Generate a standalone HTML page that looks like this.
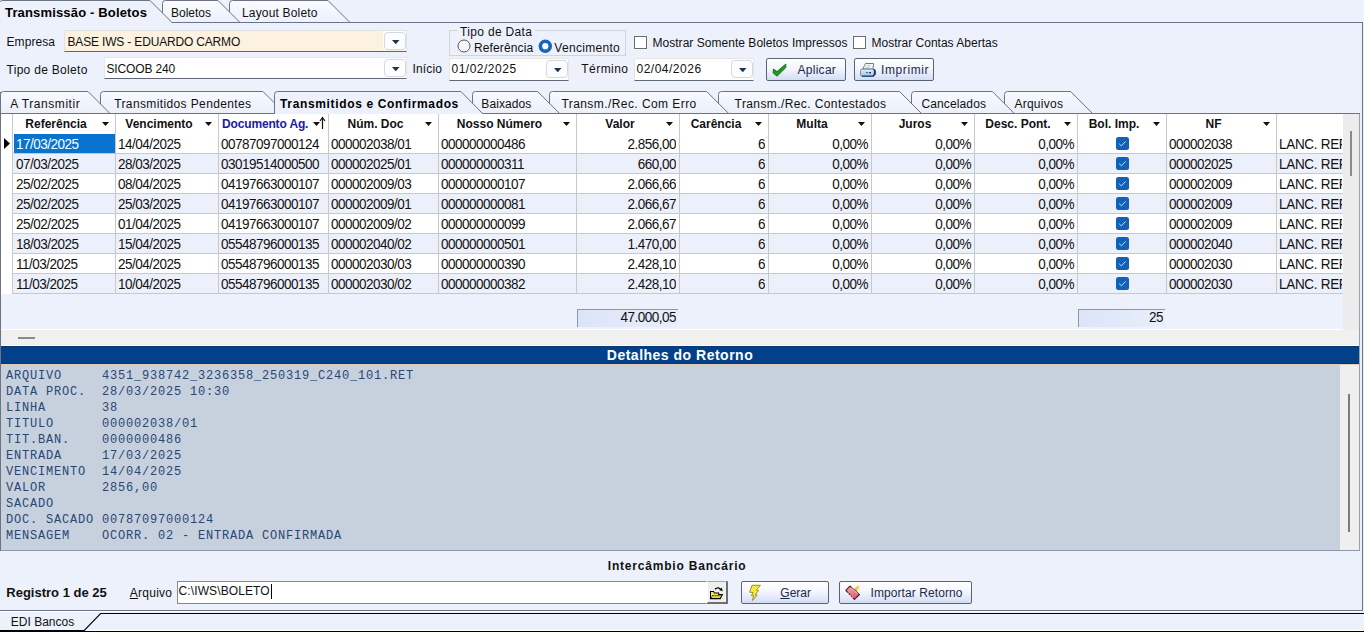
<!DOCTYPE html><html><head><meta charset="utf-8"><style>
html,body{margin:0;padding:0;}
body{width:1364px;height:632px;overflow:hidden;position:relative;background:#ecf1fc;font-family:"Liberation Sans",sans-serif;}
.t{position:absolute;white-space:nowrap;}
svg{position:absolute;left:0;top:0;}
</style></head><body>
<div style="position:absolute;left:1px;top:114px;width:1358px;height:437px;background:#f0f0f0"></div>
<div style="position:absolute;left:1px;top:114px;width:1342px;height:215px;background:#ecf1fc"></div>
<div style="position:absolute;left:1px;top:114px;width:1342px;height:180px;background:#ffffff"></div>
<div style="position:absolute;left:13px;top:154px;width:1330px;height:19px;background:#ebf0fb"></div>
<div style="position:absolute;left:13px;top:194px;width:1330px;height:19px;background:#ebf0fb"></div>
<div style="position:absolute;left:13px;top:234px;width:1330px;height:19px;background:#ebf0fb"></div>
<div style="position:absolute;left:13px;top:274px;width:1330px;height:19px;background:#ebf0fb"></div>
<div style="position:absolute;left:14px;top:134px;width:101px;height:19px;background:#0874d0"></div>
<div style="position:absolute;left:13px;top:153px;width:1330px;height:1px;background:#c6c8cd"></div>
<div style="position:absolute;left:13px;top:173px;width:1330px;height:1px;background:#c6c8cd"></div>
<div style="position:absolute;left:13px;top:193px;width:1330px;height:1px;background:#c6c8cd"></div>
<div style="position:absolute;left:13px;top:213px;width:1330px;height:1px;background:#c6c8cd"></div>
<div style="position:absolute;left:13px;top:233px;width:1330px;height:1px;background:#c6c8cd"></div>
<div style="position:absolute;left:13px;top:253px;width:1330px;height:1px;background:#c6c8cd"></div>
<div style="position:absolute;left:13px;top:273px;width:1330px;height:1px;background:#c6c8cd"></div>
<div style="position:absolute;left:13px;top:293px;width:1330px;height:1px;background:#c6c8cd"></div>
<div style="position:absolute;left:12px;top:114px;width:1px;height:180px;background:#c6c8cd"></div>
<div style="position:absolute;left:115px;top:114px;width:1px;height:180px;background:#c6c8cd"></div>
<div style="position:absolute;left:218px;top:114px;width:1px;height:180px;background:#c6c8cd"></div>
<div style="position:absolute;left:328px;top:114px;width:1px;height:180px;background:#c6c8cd"></div>
<div style="position:absolute;left:438px;top:114px;width:1px;height:180px;background:#c6c8cd"></div>
<div style="position:absolute;left:576px;top:114px;width:1px;height:180px;background:#c6c8cd"></div>
<div style="position:absolute;left:679px;top:114px;width:1px;height:180px;background:#c6c8cd"></div>
<div style="position:absolute;left:768px;top:114px;width:1px;height:180px;background:#c6c8cd"></div>
<div style="position:absolute;left:871px;top:114px;width:1px;height:180px;background:#c6c8cd"></div>
<div style="position:absolute;left:974px;top:114px;width:1px;height:180px;background:#c6c8cd"></div>
<div style="position:absolute;left:1077px;top:114px;width:1px;height:180px;background:#c6c8cd"></div>
<div style="position:absolute;left:1166px;top:114px;width:1px;height:180px;background:#c6c8cd"></div>
<div style="position:absolute;left:1276px;top:114px;width:1px;height:180px;background:#c6c8cd"></div>
<div class="t" style="left:-144.0px;width:400px;text-align:center;top:117.64px;font-size:12px;line-height:12px;font-weight:bold;color:#111111;letter-spacing:0px;">Referência</div>
<svg style="left:102px;top:122px" width="8" height="5"><path d="M0 0H7L3.5 4Z" fill="#111"/></svg>
<div class="t" style="left:-41.0px;width:400px;text-align:center;top:117.64px;font-size:12px;line-height:12px;font-weight:bold;color:#111111;letter-spacing:0px;">Vencimento</div>
<svg style="left:205px;top:122px" width="8" height="5"><path d="M0 0H7L3.5 4Z" fill="#111"/></svg>
<div class="t" style="left:222px;top:117.64px;font-size:12px;line-height:12px;font-weight:bold;color:#20209c;letter-spacing:-0.15px;font-family:'Liberation Sans', sans-serif;">Documento Ag.</div>
<svg style="left:313px;top:122px" width="8" height="5"><path d="M0 0H7L3.5 4Z" fill="#111"/></svg>
<div class="t" style="left:175.5px;width:400px;text-align:center;top:117.64px;font-size:12px;line-height:12px;font-weight:bold;color:#111111;letter-spacing:0px;">Núm. Doc</div>
<svg style="left:425px;top:122px" width="8" height="5"><path d="M0 0H7L3.5 4Z" fill="#111"/></svg>
<div class="t" style="left:299.5px;width:400px;text-align:center;top:117.64px;font-size:12px;line-height:12px;font-weight:bold;color:#111111;letter-spacing:0px;">Nosso Número</div>
<svg style="left:563px;top:122px" width="8" height="5"><path d="M0 0H7L3.5 4Z" fill="#111"/></svg>
<div class="t" style="left:420.0px;width:400px;text-align:center;top:117.64px;font-size:12px;line-height:12px;font-weight:bold;color:#111111;letter-spacing:0px;">Valor</div>
<svg style="left:666px;top:122px" width="8" height="5"><path d="M0 0H7L3.5 4Z" fill="#111"/></svg>
<div class="t" style="left:516.0px;width:400px;text-align:center;top:117.64px;font-size:12px;line-height:12px;font-weight:bold;color:#111111;letter-spacing:0px;">Carência</div>
<svg style="left:755px;top:122px" width="8" height="5"><path d="M0 0H7L3.5 4Z" fill="#111"/></svg>
<div class="t" style="left:612.0px;width:400px;text-align:center;top:117.64px;font-size:12px;line-height:12px;font-weight:bold;color:#111111;letter-spacing:0px;">Multa</div>
<svg style="left:858px;top:122px" width="8" height="5"><path d="M0 0H7L3.5 4Z" fill="#111"/></svg>
<div class="t" style="left:715.0px;width:400px;text-align:center;top:117.64px;font-size:12px;line-height:12px;font-weight:bold;color:#111111;letter-spacing:0px;">Juros</div>
<svg style="left:961px;top:122px" width="8" height="5"><path d="M0 0H7L3.5 4Z" fill="#111"/></svg>
<div class="t" style="left:818.0px;width:400px;text-align:center;top:117.64px;font-size:12px;line-height:12px;font-weight:bold;color:#111111;letter-spacing:0px;">Desc. Pont.</div>
<svg style="left:1064px;top:122px" width="8" height="5"><path d="M0 0H7L3.5 4Z" fill="#111"/></svg>
<div class="t" style="left:914.0px;width:400px;text-align:center;top:117.64px;font-size:12px;line-height:12px;font-weight:bold;color:#111111;letter-spacing:0px;">Bol. Imp.</div>
<svg style="left:1153px;top:122px" width="8" height="5"><path d="M0 0H7L3.5 4Z" fill="#111"/></svg>
<div class="t" style="left:1013.5px;width:400px;text-align:center;top:117.64px;font-size:12px;line-height:12px;font-weight:bold;color:#111111;letter-spacing:0px;">NF</div>
<svg style="left:1263px;top:122px" width="8" height="5"><path d="M0 0H7L3.5 4Z" fill="#111"/></svg>
<svg style="left:318px;top:116px" width="9" height="14"><path d="M4.5 1.8V13" stroke="#111" stroke-width="1.2"/><path d="M2 5L4.5 1.5L7 5" stroke="#111" stroke-width="1.2" fill="none"/></svg>
<div class="t" style="left:16px;top:137.67px;font-size:13.5px;line-height:13.5px;font-weight:normal;color:#ffffff;letter-spacing:-0.5px;font-family:'Liberation Sans', sans-serif;transform:scaleY(1.1);transform-origin:0 11.43px;">17/03/2025</div>
<div class="t" style="left:118px;top:137.67px;font-size:13.5px;line-height:13.5px;font-weight:normal;color:#111;letter-spacing:-0.5px;font-family:'Liberation Sans', sans-serif;transform:scaleY(1.1);transform-origin:0 11.43px;">14/04/2025</div>
<div class="t" style="left:221px;top:137.67px;font-size:13.5px;line-height:13.5px;font-weight:normal;color:#111;letter-spacing:-0.5px;font-family:'Liberation Sans', sans-serif;transform:scaleY(1.1);transform-origin:0 11.43px;">00787097000124</div>
<div class="t" style="left:331px;top:137.67px;font-size:13.5px;line-height:13.5px;font-weight:normal;color:#111;letter-spacing:-0.5px;font-family:'Liberation Sans', sans-serif;transform:scaleY(1.1);transform-origin:0 11.43px;">000002038/01</div>
<div class="t" style="left:441px;top:137.67px;font-size:13.5px;line-height:13.5px;font-weight:normal;color:#111;letter-spacing:-0.5px;font-family:'Liberation Sans', sans-serif;transform:scaleY(1.1);transform-origin:0 11.43px;">000000000486</div>
<div class="t" style="right:688px;top:137.67px;font-size:13.5px;line-height:13.5px;font-weight:normal;color:#111;letter-spacing:-0.5px;text-align:right;transform:scaleY(1.1);transform-origin:0 11.43px;">2.856,00</div>
<div class="t" style="right:599px;top:137.67px;font-size:13.5px;line-height:13.5px;font-weight:normal;color:#111;letter-spacing:-0.5px;text-align:right;transform:scaleY(1.1);transform-origin:0 11.43px;">6</div>
<div class="t" style="right:496px;top:137.67px;font-size:13.5px;line-height:13.5px;font-weight:normal;color:#111;letter-spacing:-0.5px;text-align:right;transform:scaleY(1.1);transform-origin:0 11.43px;">0,00%</div>
<div class="t" style="right:393px;top:137.67px;font-size:13.5px;line-height:13.5px;font-weight:normal;color:#111;letter-spacing:-0.5px;text-align:right;transform:scaleY(1.1);transform-origin:0 11.43px;">0,00%</div>
<div class="t" style="right:290px;top:137.67px;font-size:13.5px;line-height:13.5px;font-weight:normal;color:#111;letter-spacing:-0.5px;text-align:right;transform:scaleY(1.1);transform-origin:0 11.43px;">0,00%</div>
<svg style="left:1116px;top:137px" width="13" height="13"><rect x="0" y="0" width="13" height="13" rx="2.5" fill="#1160b9"/><path d="M3.2 6.8L5.4 8.8L9.6 4.4" stroke="#c4def8" stroke-width="1" fill="none"/></svg>
<div class="t" style="left:1169px;top:137.67px;font-size:13.5px;line-height:13.5px;font-weight:normal;color:#111;letter-spacing:-0.5px;font-family:'Liberation Sans', sans-serif;transform:scaleY(1.1);transform-origin:0 11.43px;">000002038</div>
<div class="t" style="left:1279px;top:137.67px;width:63px;overflow:hidden;font-size:13.5px;line-height:13.5px;letter-spacing:-0.3px;color:#111;transform:scaleY(1.1);transform-origin:0 11.43px;">LANC. REF. DOC</div>
<div class="t" style="left:16px;top:157.67px;font-size:13.5px;line-height:13.5px;font-weight:normal;color:#111;letter-spacing:-0.5px;font-family:'Liberation Sans', sans-serif;transform:scaleY(1.1);transform-origin:0 11.43px;">07/03/2025</div>
<div class="t" style="left:118px;top:157.67px;font-size:13.5px;line-height:13.5px;font-weight:normal;color:#111;letter-spacing:-0.5px;font-family:'Liberation Sans', sans-serif;transform:scaleY(1.1);transform-origin:0 11.43px;">28/03/2025</div>
<div class="t" style="left:221px;top:157.67px;font-size:13.5px;line-height:13.5px;font-weight:normal;color:#111;letter-spacing:-0.5px;font-family:'Liberation Sans', sans-serif;transform:scaleY(1.1);transform-origin:0 11.43px;">03019514000500</div>
<div class="t" style="left:331px;top:157.67px;font-size:13.5px;line-height:13.5px;font-weight:normal;color:#111;letter-spacing:-0.5px;font-family:'Liberation Sans', sans-serif;transform:scaleY(1.1);transform-origin:0 11.43px;">000002025/01</div>
<div class="t" style="left:441px;top:157.67px;font-size:13.5px;line-height:13.5px;font-weight:normal;color:#111;letter-spacing:-0.5px;font-family:'Liberation Sans', sans-serif;transform:scaleY(1.1);transform-origin:0 11.43px;">000000000311</div>
<div class="t" style="right:688px;top:157.67px;font-size:13.5px;line-height:13.5px;font-weight:normal;color:#111;letter-spacing:-0.5px;text-align:right;transform:scaleY(1.1);transform-origin:0 11.43px;">660,00</div>
<div class="t" style="right:599px;top:157.67px;font-size:13.5px;line-height:13.5px;font-weight:normal;color:#111;letter-spacing:-0.5px;text-align:right;transform:scaleY(1.1);transform-origin:0 11.43px;">6</div>
<div class="t" style="right:496px;top:157.67px;font-size:13.5px;line-height:13.5px;font-weight:normal;color:#111;letter-spacing:-0.5px;text-align:right;transform:scaleY(1.1);transform-origin:0 11.43px;">0,00%</div>
<div class="t" style="right:393px;top:157.67px;font-size:13.5px;line-height:13.5px;font-weight:normal;color:#111;letter-spacing:-0.5px;text-align:right;transform:scaleY(1.1);transform-origin:0 11.43px;">0,00%</div>
<div class="t" style="right:290px;top:157.67px;font-size:13.5px;line-height:13.5px;font-weight:normal;color:#111;letter-spacing:-0.5px;text-align:right;transform:scaleY(1.1);transform-origin:0 11.43px;">0,00%</div>
<svg style="left:1116px;top:157px" width="13" height="13"><rect x="0" y="0" width="13" height="13" rx="2.5" fill="#1160b9"/><path d="M3.2 6.8L5.4 8.8L9.6 4.4" stroke="#c4def8" stroke-width="1" fill="none"/></svg>
<div class="t" style="left:1169px;top:157.67px;font-size:13.5px;line-height:13.5px;font-weight:normal;color:#111;letter-spacing:-0.5px;font-family:'Liberation Sans', sans-serif;transform:scaleY(1.1);transform-origin:0 11.43px;">000002025</div>
<div class="t" style="left:1279px;top:157.67px;width:63px;overflow:hidden;font-size:13.5px;line-height:13.5px;letter-spacing:-0.3px;color:#111;transform:scaleY(1.1);transform-origin:0 11.43px;">LANC. REF. DOC</div>
<div class="t" style="left:16px;top:177.67px;font-size:13.5px;line-height:13.5px;font-weight:normal;color:#111;letter-spacing:-0.5px;font-family:'Liberation Sans', sans-serif;transform:scaleY(1.1);transform-origin:0 11.43px;">25/02/2025</div>
<div class="t" style="left:118px;top:177.67px;font-size:13.5px;line-height:13.5px;font-weight:normal;color:#111;letter-spacing:-0.5px;font-family:'Liberation Sans', sans-serif;transform:scaleY(1.1);transform-origin:0 11.43px;">08/04/2025</div>
<div class="t" style="left:221px;top:177.67px;font-size:13.5px;line-height:13.5px;font-weight:normal;color:#111;letter-spacing:-0.5px;font-family:'Liberation Sans', sans-serif;transform:scaleY(1.1);transform-origin:0 11.43px;">04197663000107</div>
<div class="t" style="left:331px;top:177.67px;font-size:13.5px;line-height:13.5px;font-weight:normal;color:#111;letter-spacing:-0.5px;font-family:'Liberation Sans', sans-serif;transform:scaleY(1.1);transform-origin:0 11.43px;">000002009/03</div>
<div class="t" style="left:441px;top:177.67px;font-size:13.5px;line-height:13.5px;font-weight:normal;color:#111;letter-spacing:-0.5px;font-family:'Liberation Sans', sans-serif;transform:scaleY(1.1);transform-origin:0 11.43px;">000000000107</div>
<div class="t" style="right:688px;top:177.67px;font-size:13.5px;line-height:13.5px;font-weight:normal;color:#111;letter-spacing:-0.5px;text-align:right;transform:scaleY(1.1);transform-origin:0 11.43px;">2.066,66</div>
<div class="t" style="right:599px;top:177.67px;font-size:13.5px;line-height:13.5px;font-weight:normal;color:#111;letter-spacing:-0.5px;text-align:right;transform:scaleY(1.1);transform-origin:0 11.43px;">6</div>
<div class="t" style="right:496px;top:177.67px;font-size:13.5px;line-height:13.5px;font-weight:normal;color:#111;letter-spacing:-0.5px;text-align:right;transform:scaleY(1.1);transform-origin:0 11.43px;">0,00%</div>
<div class="t" style="right:393px;top:177.67px;font-size:13.5px;line-height:13.5px;font-weight:normal;color:#111;letter-spacing:-0.5px;text-align:right;transform:scaleY(1.1);transform-origin:0 11.43px;">0,00%</div>
<div class="t" style="right:290px;top:177.67px;font-size:13.5px;line-height:13.5px;font-weight:normal;color:#111;letter-spacing:-0.5px;text-align:right;transform:scaleY(1.1);transform-origin:0 11.43px;">0,00%</div>
<svg style="left:1116px;top:177px" width="13" height="13"><rect x="0" y="0" width="13" height="13" rx="2.5" fill="#1160b9"/><path d="M3.2 6.8L5.4 8.8L9.6 4.4" stroke="#c4def8" stroke-width="1" fill="none"/></svg>
<div class="t" style="left:1169px;top:177.67px;font-size:13.5px;line-height:13.5px;font-weight:normal;color:#111;letter-spacing:-0.5px;font-family:'Liberation Sans', sans-serif;transform:scaleY(1.1);transform-origin:0 11.43px;">000002009</div>
<div class="t" style="left:1279px;top:177.67px;width:63px;overflow:hidden;font-size:13.5px;line-height:13.5px;letter-spacing:-0.3px;color:#111;transform:scaleY(1.1);transform-origin:0 11.43px;">LANC. REF. DOC</div>
<div class="t" style="left:16px;top:197.67px;font-size:13.5px;line-height:13.5px;font-weight:normal;color:#111;letter-spacing:-0.5px;font-family:'Liberation Sans', sans-serif;transform:scaleY(1.1);transform-origin:0 11.43px;">25/02/2025</div>
<div class="t" style="left:118px;top:197.67px;font-size:13.5px;line-height:13.5px;font-weight:normal;color:#111;letter-spacing:-0.5px;font-family:'Liberation Sans', sans-serif;transform:scaleY(1.1);transform-origin:0 11.43px;">25/03/2025</div>
<div class="t" style="left:221px;top:197.67px;font-size:13.5px;line-height:13.5px;font-weight:normal;color:#111;letter-spacing:-0.5px;font-family:'Liberation Sans', sans-serif;transform:scaleY(1.1);transform-origin:0 11.43px;">04197663000107</div>
<div class="t" style="left:331px;top:197.67px;font-size:13.5px;line-height:13.5px;font-weight:normal;color:#111;letter-spacing:-0.5px;font-family:'Liberation Sans', sans-serif;transform:scaleY(1.1);transform-origin:0 11.43px;">000002009/01</div>
<div class="t" style="left:441px;top:197.67px;font-size:13.5px;line-height:13.5px;font-weight:normal;color:#111;letter-spacing:-0.5px;font-family:'Liberation Sans', sans-serif;transform:scaleY(1.1);transform-origin:0 11.43px;">000000000081</div>
<div class="t" style="right:688px;top:197.67px;font-size:13.5px;line-height:13.5px;font-weight:normal;color:#111;letter-spacing:-0.5px;text-align:right;transform:scaleY(1.1);transform-origin:0 11.43px;">2.066,67</div>
<div class="t" style="right:599px;top:197.67px;font-size:13.5px;line-height:13.5px;font-weight:normal;color:#111;letter-spacing:-0.5px;text-align:right;transform:scaleY(1.1);transform-origin:0 11.43px;">6</div>
<div class="t" style="right:496px;top:197.67px;font-size:13.5px;line-height:13.5px;font-weight:normal;color:#111;letter-spacing:-0.5px;text-align:right;transform:scaleY(1.1);transform-origin:0 11.43px;">0,00%</div>
<div class="t" style="right:393px;top:197.67px;font-size:13.5px;line-height:13.5px;font-weight:normal;color:#111;letter-spacing:-0.5px;text-align:right;transform:scaleY(1.1);transform-origin:0 11.43px;">0,00%</div>
<div class="t" style="right:290px;top:197.67px;font-size:13.5px;line-height:13.5px;font-weight:normal;color:#111;letter-spacing:-0.5px;text-align:right;transform:scaleY(1.1);transform-origin:0 11.43px;">0,00%</div>
<svg style="left:1116px;top:197px" width="13" height="13"><rect x="0" y="0" width="13" height="13" rx="2.5" fill="#1160b9"/><path d="M3.2 6.8L5.4 8.8L9.6 4.4" stroke="#c4def8" stroke-width="1" fill="none"/></svg>
<div class="t" style="left:1169px;top:197.67px;font-size:13.5px;line-height:13.5px;font-weight:normal;color:#111;letter-spacing:-0.5px;font-family:'Liberation Sans', sans-serif;transform:scaleY(1.1);transform-origin:0 11.43px;">000002009</div>
<div class="t" style="left:1279px;top:197.67px;width:63px;overflow:hidden;font-size:13.5px;line-height:13.5px;letter-spacing:-0.3px;color:#111;transform:scaleY(1.1);transform-origin:0 11.43px;">LANC. REF. DOC</div>
<div class="t" style="left:16px;top:217.67px;font-size:13.5px;line-height:13.5px;font-weight:normal;color:#111;letter-spacing:-0.5px;font-family:'Liberation Sans', sans-serif;transform:scaleY(1.1);transform-origin:0 11.43px;">25/02/2025</div>
<div class="t" style="left:118px;top:217.67px;font-size:13.5px;line-height:13.5px;font-weight:normal;color:#111;letter-spacing:-0.5px;font-family:'Liberation Sans', sans-serif;transform:scaleY(1.1);transform-origin:0 11.43px;">01/04/2025</div>
<div class="t" style="left:221px;top:217.67px;font-size:13.5px;line-height:13.5px;font-weight:normal;color:#111;letter-spacing:-0.5px;font-family:'Liberation Sans', sans-serif;transform:scaleY(1.1);transform-origin:0 11.43px;">04197663000107</div>
<div class="t" style="left:331px;top:217.67px;font-size:13.5px;line-height:13.5px;font-weight:normal;color:#111;letter-spacing:-0.5px;font-family:'Liberation Sans', sans-serif;transform:scaleY(1.1);transform-origin:0 11.43px;">000002009/02</div>
<div class="t" style="left:441px;top:217.67px;font-size:13.5px;line-height:13.5px;font-weight:normal;color:#111;letter-spacing:-0.5px;font-family:'Liberation Sans', sans-serif;transform:scaleY(1.1);transform-origin:0 11.43px;">000000000099</div>
<div class="t" style="right:688px;top:217.67px;font-size:13.5px;line-height:13.5px;font-weight:normal;color:#111;letter-spacing:-0.5px;text-align:right;transform:scaleY(1.1);transform-origin:0 11.43px;">2.066,67</div>
<div class="t" style="right:599px;top:217.67px;font-size:13.5px;line-height:13.5px;font-weight:normal;color:#111;letter-spacing:-0.5px;text-align:right;transform:scaleY(1.1);transform-origin:0 11.43px;">6</div>
<div class="t" style="right:496px;top:217.67px;font-size:13.5px;line-height:13.5px;font-weight:normal;color:#111;letter-spacing:-0.5px;text-align:right;transform:scaleY(1.1);transform-origin:0 11.43px;">0,00%</div>
<div class="t" style="right:393px;top:217.67px;font-size:13.5px;line-height:13.5px;font-weight:normal;color:#111;letter-spacing:-0.5px;text-align:right;transform:scaleY(1.1);transform-origin:0 11.43px;">0,00%</div>
<div class="t" style="right:290px;top:217.67px;font-size:13.5px;line-height:13.5px;font-weight:normal;color:#111;letter-spacing:-0.5px;text-align:right;transform:scaleY(1.1);transform-origin:0 11.43px;">0,00%</div>
<svg style="left:1116px;top:217px" width="13" height="13"><rect x="0" y="0" width="13" height="13" rx="2.5" fill="#1160b9"/><path d="M3.2 6.8L5.4 8.8L9.6 4.4" stroke="#c4def8" stroke-width="1" fill="none"/></svg>
<div class="t" style="left:1169px;top:217.67px;font-size:13.5px;line-height:13.5px;font-weight:normal;color:#111;letter-spacing:-0.5px;font-family:'Liberation Sans', sans-serif;transform:scaleY(1.1);transform-origin:0 11.43px;">000002009</div>
<div class="t" style="left:1279px;top:217.67px;width:63px;overflow:hidden;font-size:13.5px;line-height:13.5px;letter-spacing:-0.3px;color:#111;transform:scaleY(1.1);transform-origin:0 11.43px;">LANC. REF. DOC</div>
<div class="t" style="left:16px;top:237.67px;font-size:13.5px;line-height:13.5px;font-weight:normal;color:#111;letter-spacing:-0.5px;font-family:'Liberation Sans', sans-serif;transform:scaleY(1.1);transform-origin:0 11.43px;">18/03/2025</div>
<div class="t" style="left:118px;top:237.67px;font-size:13.5px;line-height:13.5px;font-weight:normal;color:#111;letter-spacing:-0.5px;font-family:'Liberation Sans', sans-serif;transform:scaleY(1.1);transform-origin:0 11.43px;">15/04/2025</div>
<div class="t" style="left:221px;top:237.67px;font-size:13.5px;line-height:13.5px;font-weight:normal;color:#111;letter-spacing:-0.5px;font-family:'Liberation Sans', sans-serif;transform:scaleY(1.1);transform-origin:0 11.43px;">05548796000135</div>
<div class="t" style="left:331px;top:237.67px;font-size:13.5px;line-height:13.5px;font-weight:normal;color:#111;letter-spacing:-0.5px;font-family:'Liberation Sans', sans-serif;transform:scaleY(1.1);transform-origin:0 11.43px;">000002040/02</div>
<div class="t" style="left:441px;top:237.67px;font-size:13.5px;line-height:13.5px;font-weight:normal;color:#111;letter-spacing:-0.5px;font-family:'Liberation Sans', sans-serif;transform:scaleY(1.1);transform-origin:0 11.43px;">000000000501</div>
<div class="t" style="right:688px;top:237.67px;font-size:13.5px;line-height:13.5px;font-weight:normal;color:#111;letter-spacing:-0.5px;text-align:right;transform:scaleY(1.1);transform-origin:0 11.43px;">1.470,00</div>
<div class="t" style="right:599px;top:237.67px;font-size:13.5px;line-height:13.5px;font-weight:normal;color:#111;letter-spacing:-0.5px;text-align:right;transform:scaleY(1.1);transform-origin:0 11.43px;">6</div>
<div class="t" style="right:496px;top:237.67px;font-size:13.5px;line-height:13.5px;font-weight:normal;color:#111;letter-spacing:-0.5px;text-align:right;transform:scaleY(1.1);transform-origin:0 11.43px;">0,00%</div>
<div class="t" style="right:393px;top:237.67px;font-size:13.5px;line-height:13.5px;font-weight:normal;color:#111;letter-spacing:-0.5px;text-align:right;transform:scaleY(1.1);transform-origin:0 11.43px;">0,00%</div>
<div class="t" style="right:290px;top:237.67px;font-size:13.5px;line-height:13.5px;font-weight:normal;color:#111;letter-spacing:-0.5px;text-align:right;transform:scaleY(1.1);transform-origin:0 11.43px;">0,00%</div>
<svg style="left:1116px;top:237px" width="13" height="13"><rect x="0" y="0" width="13" height="13" rx="2.5" fill="#1160b9"/><path d="M3.2 6.8L5.4 8.8L9.6 4.4" stroke="#c4def8" stroke-width="1" fill="none"/></svg>
<div class="t" style="left:1169px;top:237.67px;font-size:13.5px;line-height:13.5px;font-weight:normal;color:#111;letter-spacing:-0.5px;font-family:'Liberation Sans', sans-serif;transform:scaleY(1.1);transform-origin:0 11.43px;">000002040</div>
<div class="t" style="left:1279px;top:237.67px;width:63px;overflow:hidden;font-size:13.5px;line-height:13.5px;letter-spacing:-0.3px;color:#111;transform:scaleY(1.1);transform-origin:0 11.43px;">LANC. REF. DOC</div>
<div class="t" style="left:16px;top:257.67px;font-size:13.5px;line-height:13.5px;font-weight:normal;color:#111;letter-spacing:-0.5px;font-family:'Liberation Sans', sans-serif;transform:scaleY(1.1);transform-origin:0 11.43px;">11/03/2025</div>
<div class="t" style="left:118px;top:257.67px;font-size:13.5px;line-height:13.5px;font-weight:normal;color:#111;letter-spacing:-0.5px;font-family:'Liberation Sans', sans-serif;transform:scaleY(1.1);transform-origin:0 11.43px;">25/04/2025</div>
<div class="t" style="left:221px;top:257.67px;font-size:13.5px;line-height:13.5px;font-weight:normal;color:#111;letter-spacing:-0.5px;font-family:'Liberation Sans', sans-serif;transform:scaleY(1.1);transform-origin:0 11.43px;">05548796000135</div>
<div class="t" style="left:331px;top:257.67px;font-size:13.5px;line-height:13.5px;font-weight:normal;color:#111;letter-spacing:-0.5px;font-family:'Liberation Sans', sans-serif;transform:scaleY(1.1);transform-origin:0 11.43px;">000002030/03</div>
<div class="t" style="left:441px;top:257.67px;font-size:13.5px;line-height:13.5px;font-weight:normal;color:#111;letter-spacing:-0.5px;font-family:'Liberation Sans', sans-serif;transform:scaleY(1.1);transform-origin:0 11.43px;">000000000390</div>
<div class="t" style="right:688px;top:257.67px;font-size:13.5px;line-height:13.5px;font-weight:normal;color:#111;letter-spacing:-0.5px;text-align:right;transform:scaleY(1.1);transform-origin:0 11.43px;">2.428,10</div>
<div class="t" style="right:599px;top:257.67px;font-size:13.5px;line-height:13.5px;font-weight:normal;color:#111;letter-spacing:-0.5px;text-align:right;transform:scaleY(1.1);transform-origin:0 11.43px;">6</div>
<div class="t" style="right:496px;top:257.67px;font-size:13.5px;line-height:13.5px;font-weight:normal;color:#111;letter-spacing:-0.5px;text-align:right;transform:scaleY(1.1);transform-origin:0 11.43px;">0,00%</div>
<div class="t" style="right:393px;top:257.67px;font-size:13.5px;line-height:13.5px;font-weight:normal;color:#111;letter-spacing:-0.5px;text-align:right;transform:scaleY(1.1);transform-origin:0 11.43px;">0,00%</div>
<div class="t" style="right:290px;top:257.67px;font-size:13.5px;line-height:13.5px;font-weight:normal;color:#111;letter-spacing:-0.5px;text-align:right;transform:scaleY(1.1);transform-origin:0 11.43px;">0,00%</div>
<svg style="left:1116px;top:257px" width="13" height="13"><rect x="0" y="0" width="13" height="13" rx="2.5" fill="#1160b9"/><path d="M3.2 6.8L5.4 8.8L9.6 4.4" stroke="#c4def8" stroke-width="1" fill="none"/></svg>
<div class="t" style="left:1169px;top:257.67px;font-size:13.5px;line-height:13.5px;font-weight:normal;color:#111;letter-spacing:-0.5px;font-family:'Liberation Sans', sans-serif;transform:scaleY(1.1);transform-origin:0 11.43px;">000002030</div>
<div class="t" style="left:1279px;top:257.67px;width:63px;overflow:hidden;font-size:13.5px;line-height:13.5px;letter-spacing:-0.3px;color:#111;transform:scaleY(1.1);transform-origin:0 11.43px;">LANC. REF. DOC</div>
<div class="t" style="left:16px;top:277.67px;font-size:13.5px;line-height:13.5px;font-weight:normal;color:#111;letter-spacing:-0.5px;font-family:'Liberation Sans', sans-serif;transform:scaleY(1.1);transform-origin:0 11.43px;">11/03/2025</div>
<div class="t" style="left:118px;top:277.67px;font-size:13.5px;line-height:13.5px;font-weight:normal;color:#111;letter-spacing:-0.5px;font-family:'Liberation Sans', sans-serif;transform:scaleY(1.1);transform-origin:0 11.43px;">10/04/2025</div>
<div class="t" style="left:221px;top:277.67px;font-size:13.5px;line-height:13.5px;font-weight:normal;color:#111;letter-spacing:-0.5px;font-family:'Liberation Sans', sans-serif;transform:scaleY(1.1);transform-origin:0 11.43px;">05548796000135</div>
<div class="t" style="left:331px;top:277.67px;font-size:13.5px;line-height:13.5px;font-weight:normal;color:#111;letter-spacing:-0.5px;font-family:'Liberation Sans', sans-serif;transform:scaleY(1.1);transform-origin:0 11.43px;">000002030/02</div>
<div class="t" style="left:441px;top:277.67px;font-size:13.5px;line-height:13.5px;font-weight:normal;color:#111;letter-spacing:-0.5px;font-family:'Liberation Sans', sans-serif;transform:scaleY(1.1);transform-origin:0 11.43px;">000000000382</div>
<div class="t" style="right:688px;top:277.67px;font-size:13.5px;line-height:13.5px;font-weight:normal;color:#111;letter-spacing:-0.5px;text-align:right;transform:scaleY(1.1);transform-origin:0 11.43px;">2.428,10</div>
<div class="t" style="right:599px;top:277.67px;font-size:13.5px;line-height:13.5px;font-weight:normal;color:#111;letter-spacing:-0.5px;text-align:right;transform:scaleY(1.1);transform-origin:0 11.43px;">6</div>
<div class="t" style="right:496px;top:277.67px;font-size:13.5px;line-height:13.5px;font-weight:normal;color:#111;letter-spacing:-0.5px;text-align:right;transform:scaleY(1.1);transform-origin:0 11.43px;">0,00%</div>
<div class="t" style="right:393px;top:277.67px;font-size:13.5px;line-height:13.5px;font-weight:normal;color:#111;letter-spacing:-0.5px;text-align:right;transform:scaleY(1.1);transform-origin:0 11.43px;">0,00%</div>
<div class="t" style="right:290px;top:277.67px;font-size:13.5px;line-height:13.5px;font-weight:normal;color:#111;letter-spacing:-0.5px;text-align:right;transform:scaleY(1.1);transform-origin:0 11.43px;">0,00%</div>
<svg style="left:1116px;top:277px" width="13" height="13"><rect x="0" y="0" width="13" height="13" rx="2.5" fill="#1160b9"/><path d="M3.2 6.8L5.4 8.8L9.6 4.4" stroke="#c4def8" stroke-width="1" fill="none"/></svg>
<div class="t" style="left:1169px;top:277.67px;font-size:13.5px;line-height:13.5px;font-weight:normal;color:#111;letter-spacing:-0.5px;font-family:'Liberation Sans', sans-serif;transform:scaleY(1.1);transform-origin:0 11.43px;">000002030</div>
<div class="t" style="left:1279px;top:277.67px;width:63px;overflow:hidden;font-size:13.5px;line-height:13.5px;letter-spacing:-0.3px;color:#111;transform:scaleY(1.1);transform-origin:0 11.43px;">LANC. REF. DOC</div>
<svg style="left:4px;top:138px" width="7" height="12"><path d="M0 0L6 5.5L0 11Z" fill="#000"/></svg>
<div style="position:absolute;left:1343px;top:114px;width:16px;height:215px;background:#ececec"></div>
<div style="position:absolute;left:1350px;top:131px;width:2px;height:45px;background:#8a8a8a"></div>
<div style="position:absolute;left:577px;top:309px;width:101px;height:18px;background:linear-gradient(90deg,#dce4f7,#e8eefb);border-top:1px solid #8d97a8;border-left:1px solid #8d97a8;box-sizing:border-box"></div>
<div class="t" style="right:688px;top:311.47px;font-size:13.5px;line-height:13.5px;font-weight:normal;color:#111;letter-spacing:-0.5px;text-align:right;transform:scaleY(1.1);transform-origin:0 11.43px;">47.000,05</div>
<div style="position:absolute;left:1078px;top:309px;width:87px;height:18px;background:linear-gradient(90deg,#dce4f7,#e8eefb);border-top:1px solid #8d97a8;border-left:1px solid #8d97a8;box-sizing:border-box"></div>
<div class="t" style="right:201px;top:311.47px;font-size:13.5px;line-height:13.5px;font-weight:normal;color:#111;letter-spacing:-0.5px;text-align:right;transform:scaleY(1.1);transform-origin:0 11.43px;">25</div>
<div style="position:absolute;left:1px;top:329px;width:1342px;height:1px;background:#ffffff"></div>
<div style="position:absolute;left:18px;top:337px;width:17px;height:2px;background:#8a8a8a"></div>
<div style="position:absolute;left:1px;top:345px;width:1358px;height:1px;background:#fbfcff"></div>
<div style="position:absolute;left:1px;top:346px;width:1358px;height:18px;background:#02418a;border-top:1px solid #083a72;border-bottom:1px solid #0a3768;box-sizing:border-box"></div>
<div style="position:absolute;left:1px;top:364px;width:1358px;height:1px;background:#e6cdb6"></div>
<div class="t" style="left:480px;width:400px;text-align:center;top:347.95px;font-size:14px;line-height:14px;font-weight:bold;color:#ffffff;letter-spacing:0.5px;">Detalhes do Retorno</div>
<div style="position:absolute;left:1px;top:365px;width:1339px;height:186px;background:#c6d1dd"></div>
<div style="position:absolute;left:1340px;top:365px;width:19px;height:186px;background:#efefef"></div>
<div style="position:absolute;left:1348px;top:394px;width:2px;height:138px;background:#7b7b7b"></div>
<div style="position:absolute;left:1px;top:550px;width:1358px;height:1px;background:#8d97a8"></div>
<div class="t" style="left:6px;top:368.50px;font-family:'Liberation Mono',monospace;font-size:12px;line-height:14px;letter-spacing:0.8px;color:#2a4673">ARQUIVO&nbsp;&nbsp;&nbsp;&nbsp;&nbsp;4351_938742_3236358_250319_C240_101.RET</div>
<div class="t" style="left:6px;top:384.50px;font-family:'Liberation Mono',monospace;font-size:12px;line-height:14px;letter-spacing:0.8px;color:#2a4673">DATA&nbsp;PROC.&nbsp;&nbsp;28/03/2025&nbsp;10:30</div>
<div class="t" style="left:6px;top:400.50px;font-family:'Liberation Mono',monospace;font-size:12px;line-height:14px;letter-spacing:0.8px;color:#2a4673">LINHA&nbsp;&nbsp;&nbsp;&nbsp;&nbsp;&nbsp;&nbsp;38</div>
<div class="t" style="left:6px;top:416.50px;font-family:'Liberation Mono',monospace;font-size:12px;line-height:14px;letter-spacing:0.8px;color:#2a4673">TITULO&nbsp;&nbsp;&nbsp;&nbsp;&nbsp;&nbsp;000002038/01</div>
<div class="t" style="left:6px;top:432.50px;font-family:'Liberation Mono',monospace;font-size:12px;line-height:14px;letter-spacing:0.8px;color:#2a4673">TIT.BAN.&nbsp;&nbsp;&nbsp;&nbsp;0000000486</div>
<div class="t" style="left:6px;top:448.50px;font-family:'Liberation Mono',monospace;font-size:12px;line-height:14px;letter-spacing:0.8px;color:#2a4673">ENTRADA&nbsp;&nbsp;&nbsp;&nbsp;&nbsp;17/03/2025</div>
<div class="t" style="left:6px;top:464.50px;font-family:'Liberation Mono',monospace;font-size:12px;line-height:14px;letter-spacing:0.8px;color:#2a4673">VENCIMENTO&nbsp;&nbsp;14/04/2025</div>
<div class="t" style="left:6px;top:480.50px;font-family:'Liberation Mono',monospace;font-size:12px;line-height:14px;letter-spacing:0.8px;color:#2a4673">VALOR&nbsp;&nbsp;&nbsp;&nbsp;&nbsp;&nbsp;&nbsp;2856,00</div>
<div class="t" style="left:6px;top:496.50px;font-family:'Liberation Mono',monospace;font-size:12px;line-height:14px;letter-spacing:0.8px;color:#2a4673">SACADO&nbsp;&nbsp;&nbsp;&nbsp;&nbsp;&nbsp;</div>
<div class="t" style="left:6px;top:512.50px;font-family:'Liberation Mono',monospace;font-size:12px;line-height:14px;letter-spacing:0.8px;color:#2a4673">DOC.&nbsp;SACADO&nbsp;00787097000124</div>
<div class="t" style="left:6px;top:528.50px;font-family:'Liberation Mono',monospace;font-size:12px;line-height:14px;letter-spacing:0.8px;color:#2a4673">MENSAGEM&nbsp;&nbsp;&nbsp;&nbsp;OCORR.&nbsp;02&nbsp;-&nbsp;ENTRADA&nbsp;CONFIRMADA</div>
<div style="position:absolute;left:0px;top:92px;width:1px;height:459px;background:#6b7384"></div>
<div style="position:absolute;left:1359px;top:113px;width:1px;height:438px;background:#9aa2b0"></div>
<div style="position:absolute;left:1362px;top:22px;width:1px;height:589px;background:#6b7384"></div>
<div style="position:absolute;left:0px;top:610px;width:1363px;height:1px;background:#6b7384"></div>
<svg width="1364" height="120" style="left:0;top:0">
<defs><linearGradient id="tg" x1="0" y1="0" x2="0" y2="1"><stop offset="0" stop-color="#fafbfe"/><stop offset="1" stop-color="#ecf1fc"/></linearGradient></defs>
<g fill="none" stroke="#6b7384" stroke-width="1">
<path d="M229.5 22V3.5Q229.5 0.5 232.5 0.5H328L349.5 22" fill="url(#tg)"/>
<path d="M162.5 22V3.5Q162.5 0.5 165.5 0.5H218L239.5 22" fill="url(#tg)"/>
<path d="M171 22.5H1362"/>
<path d="M0 23V0.5H150L171.5 22V23Z" fill="#ecf1fc" stroke="none"/>
<path d="M0 1.5Q1 0.5 3 0.5H150L171.5 22"/>
</g>
</svg>
<div class="t" style="left:5px;top:5.80px;font-size:13px;line-height:13px;font-weight:bold;color:#000;letter-spacing:0.16px;font-family:'Liberation Sans', sans-serif;">Transmissão - Boletos</div>
<div class="t" style="left:171px;top:7.04px;font-size:12px;line-height:12px;font-weight:normal;color:#111;letter-spacing:0px;font-family:'Liberation Sans', sans-serif;">Boletos</div>
<div class="t" style="left:242px;top:6.94px;font-size:12px;line-height:12px;font-weight:normal;color:#111;letter-spacing:0.17px;font-family:'Liberation Sans', sans-serif;">Layout Boleto</div>
<div class="t" style="left:6.5px;top:35.84px;font-size:12px;line-height:12px;font-weight:normal;color:#111;letter-spacing:0.08px;font-family:'Liberation Sans', sans-serif;">Empresa</div>
<div style="position:absolute;left:64px;top:30px;width:343px;height:22px;background:#fdf1df;border:1px solid #e2e2e2;border-bottom:1px solid #5f6674;box-sizing:border-box"></div>
<div style="position:absolute;left:383px;top:31px;width:23px;height:19px;background:#fbfcfe"></div>
<div class="t" style="left:67.5px;top:35.84px;font-size:12px;line-height:12px;font-weight:normal;color:#111;letter-spacing:-0.17px;font-family:'Liberation Sans', sans-serif;">BASE IWS - EDUARDO CARMO</div>
<div style="position:absolute;left:384px;top:32px;width:22px;height:18px;background:#fcfdff;border:1px solid #d4d8e0;border-radius:4px;box-sizing:border-box"></div>
<svg style="left:392.0px;top:40.0px" width="8" height="5"><path d="M0 0H7.5L3.75 4.2Z" fill="#1c3350"/></svg>
<div style="position:absolute;left:449px;top:30px;width:177px;height:26px;border:1px solid #cfd3da;box-sizing:border-box"></div>
<div style="position:absolute;left:457px;top:25px;width:78px;height:8px;background:#ecf1fc"></div>
<div class="t" style="left:460px;top:25.94px;font-size:12px;line-height:12px;font-weight:normal;color:#111;letter-spacing:0.33px;font-family:'Liberation Sans', sans-serif;">Tipo de Data</div>
<svg style="left:457px;top:39px" width="14" height="14"><circle cx="7" cy="7" r="6" fill="#f4f6fa" stroke="#555" stroke-width="1"/></svg>
<div class="t" style="left:474px;top:41.54px;font-size:12px;line-height:12px;font-weight:normal;color:#111;letter-spacing:0.13px;font-family:'Liberation Sans', sans-serif;">Referência</div>
<svg style="left:538px;top:39px" width="15" height="15"><circle cx="7.3" cy="7.2" r="4.9" fill="#ffffff" stroke="#1565c0" stroke-width="3.6"/></svg>
<div class="t" style="left:554.3px;top:41.54px;font-size:12px;line-height:12px;font-weight:normal;color:#111;letter-spacing:0.3px;font-family:'Liberation Sans', sans-serif;">Vencimento</div>
<div style="position:absolute;left:634px;top:36px;width:13px;height:13px;background:#ffffff;border:1px solid #6c6c6c;box-sizing:border-box"></div>
<div class="t" style="left:652.5px;top:36.74px;font-size:12px;line-height:12px;font-weight:normal;color:#111;letter-spacing:0.03px;font-family:'Liberation Sans', sans-serif;">Mostrar Somente Boletos Impressos</div>
<div style="position:absolute;left:853px;top:36px;width:13px;height:13px;background:#ffffff;border:1px solid #6c6c6c;box-sizing:border-box"></div>
<div class="t" style="left:871.6px;top:36.74px;font-size:12px;line-height:12px;font-weight:normal;color:#111;letter-spacing:0.0px;font-family:'Liberation Sans', sans-serif;">Mostrar Contas Abertas</div>
<div class="t" style="left:6.5px;top:63.54px;font-size:12px;line-height:12px;font-weight:normal;color:#111;letter-spacing:0.3px;font-family:'Liberation Sans', sans-serif;">Tipo de Boleto</div>
<div style="position:absolute;left:104px;top:57px;width:303px;height:22px;background:#ffffff;border:1px solid #e6e6e6;border-bottom:1px solid #5f6674;box-sizing:border-box"></div>
<div class="t" style="left:106.5px;top:62.54px;font-size:12px;line-height:12px;font-weight:normal;color:#111;letter-spacing:-0.15px;font-family:'Liberation Sans', sans-serif;">SICOOB 240</div>
<div style="position:absolute;left:384px;top:59px;width:22px;height:18px;background:#fcfdff;border:1px solid #d4d8e0;border-radius:4px;box-sizing:border-box"></div>
<svg style="left:392.0px;top:67.0px" width="8" height="5"><path d="M0 0H7.5L3.75 4.2Z" fill="#1c3350"/></svg>
<div class="t" style="left:412.5px;top:63.44px;font-size:12px;line-height:12px;font-weight:normal;color:#111;letter-spacing:0.15px;font-family:'Liberation Sans', sans-serif;">Início</div>
<div style="position:absolute;left:449px;top:58px;width:120px;height:23px;background:#ffffff;border:1px solid #e6e6e6;border-bottom:1px solid #5f6674;box-sizing:border-box"></div>
<div class="t" style="left:451.5px;top:62.94px;font-size:12px;line-height:12px;font-weight:normal;color:#111;letter-spacing:0.5px;font-family:'Liberation Sans', sans-serif;">01/02/2025</div>
<div style="position:absolute;left:546px;top:60px;width:22px;height:18px;background:#fcfdff;border:1px solid #d4d8e0;border-radius:4px;box-sizing:border-box"></div>
<svg style="left:554.0px;top:68.0px" width="8" height="5"><path d="M0 0H7.5L3.75 4.2Z" fill="#1c3350"/></svg>
<div class="t" style="left:581.3px;top:63.34px;font-size:12px;line-height:12px;font-weight:normal;color:#111;letter-spacing:0.45px;font-family:'Liberation Sans', sans-serif;">Término</div>
<div style="position:absolute;left:634px;top:58px;width:120px;height:23px;background:#ffffff;border:1px solid #e6e6e6;border-bottom:1px solid #5f6674;box-sizing:border-box"></div>
<div class="t" style="left:636.5px;top:62.94px;font-size:12px;line-height:12px;font-weight:normal;color:#111;letter-spacing:0.5px;font-family:'Liberation Sans', sans-serif;">02/04/2026</div>
<div style="position:absolute;left:731px;top:60px;width:22px;height:18px;background:#fcfdff;border:1px solid #d4d8e0;border-radius:4px;box-sizing:border-box"></div>
<svg style="left:739.0px;top:68.0px" width="8" height="5"><path d="M0 0H7.5L3.75 4.2Z" fill="#1c3350"/></svg>
<div style="position:absolute;left:766px;top:58px;width:80px;height:23px;background:linear-gradient(#ffffff,#f3f6fd 45%,#d3ddf4);border:1px solid #5c6372;border-radius:2px;box-sizing:border-box"></div>
<svg style="left:768px;top:60px" width="24" height="20"><path d="M5.5 9L5 12.8L9 16.2L17.8 7.6V4L9 11.6Z" fill="#1f9c1f" stroke="#0f6f0f" stroke-width="0.9" stroke-linejoin="round"/></svg>
<div class="t" style="left:797.4px;top:63.54px;font-size:12px;line-height:12px;font-weight:normal;color:#1b2a4d;letter-spacing:0.3px;font-family:'Liberation Sans', sans-serif;">Aplicar</div>
<div style="position:absolute;left:854px;top:58px;width:80px;height:23px;background:linear-gradient(#ffffff,#f3f6fd 45%,#d3ddf4);border:1px solid #5c6372;border-radius:2px;box-sizing:border-box"></div>
<svg style="left:856px;top:60px" width="24" height="20">
<defs><linearGradient id="pg" x1="0" y1="0" x2="0" y2="1"><stop offset="0" stop-color="#e4f0fb"/><stop offset="1" stop-color="#9cc0e6"/></linearGradient></defs>
<path d="M9.5 3.5H17.5V5L16.8 9H6.8L8.5 5.5Z" fill="#f6f7f9" stroke="#6b7b8b" stroke-width="1"/>
<path d="M10.5 5.6H15M9.5 7.4H14" stroke="#b8c2cc" stroke-width="0.8"/>
<path d="M4.5 10.5Q4.5 9.2 6 9.2H17Q19.5 9.2 19.5 11.2V14L17.3 16.5H6.5Q4.5 16.5 4.5 14.8Z" fill="url(#pg)" stroke="#7890a8" stroke-width="1"/>
<path d="M17.2 8.8Q19.8 9 19.8 11.2V14.2L17.6 16.8H6V15.4H16.6L17.8 14V11.4Q17.8 10 17.2 9.6Z" fill="#1c3a7c"/>
<path d="M10 12.6H12" stroke="#2a9060" stroke-width="1.3"/><path d="M13 12.6H15" stroke="#3a2a5a" stroke-width="1.3"/>
</svg>
<div class="t" style="left:881px;top:63.54px;font-size:12px;line-height:12px;font-weight:normal;color:#1b2a4d;letter-spacing:0.6px;font-family:'Liberation Sans', sans-serif;">Imprimir</div>
<svg width="1364" height="120" style="left:0;top:0">
<defs><linearGradient id="sg2" x1="0" y1="0" x2="0" y2="1"><stop offset="0" stop-color="#f8fafe"/><stop offset="1" stop-color="#eaeff9"/></linearGradient></defs>
<g stroke="#6b7384" stroke-width="1" fill="url(#sg2)">
<path d="M1004.5 113V94.5Q1004.5 91.5 1007.5 91.5H1070.6L1092.1 113"/>
<path d="M911.5 113V94.5Q911.5 91.5 914.5 91.5H992.3L1013.8 113"/>
<path d="M718.5 113V94.5Q718.5 91.5 721.5 91.5H899.5L921.0 113"/>
<path d="M549.5 113V94.5Q549.5 91.5 552.5 91.5H706.7L728.2 113"/>
<path d="M472.5 113V94.5Q472.5 91.5 475.5 91.5H537.6L559.1 113"/>
<path d="M100.5 113V94.5Q100.5 91.5 103.5 91.5H263L284.5 113"/>
<path d="M0.5 113V94.5Q0.5 91.5 3.5 91.5H88L109.5 113"/>
<path d="M0 113.5H1360" fill="none"/>
<path d="M274.5 114V94.5Q274.5 91.5 277.5 91.5H461L483 114" fill="#ecf1fc"/>
</g>
</svg>
<div class="t" style="left:10.3px;top:97.64px;font-size:12px;line-height:12px;font-weight:normal;color:#111;letter-spacing:0.55px;font-family:'Liberation Sans', sans-serif;">A Transmitir</div>
<div class="t" style="left:114.2px;top:97.64px;font-size:12px;line-height:12px;font-weight:normal;color:#111;letter-spacing:0.38px;font-family:'Liberation Sans', sans-serif;">Transmitidos Pendentes</div>
<div class="t" style="left:280px;top:97.64px;font-size:12px;line-height:12px;font-weight:bold;color:#000;letter-spacing:0.65px;font-family:'Liberation Sans', sans-serif;">Transmitidos e Confirmados</div>
<div class="t" style="left:481.3px;top:97.64px;font-size:12px;line-height:12px;font-weight:normal;color:#111;letter-spacing:0.1px;font-family:'Liberation Sans', sans-serif;">Baixados</div>
<div class="t" style="left:561.4px;top:97.64px;font-size:12px;line-height:12px;font-weight:normal;color:#111;letter-spacing:0.43px;font-family:'Liberation Sans', sans-serif;">Transm./Rec. Com Erro</div>
<div class="t" style="left:734.6px;top:97.64px;font-size:12px;line-height:12px;font-weight:normal;color:#111;letter-spacing:0.4px;font-family:'Liberation Sans', sans-serif;">Transm./Rec. Contestados</div>
<div class="t" style="left:921.4px;top:97.64px;font-size:12px;line-height:12px;font-weight:normal;color:#111;letter-spacing:0.13px;font-family:'Liberation Sans', sans-serif;">Cancelados</div>
<div class="t" style="left:1014.4px;top:97.64px;font-size:12px;line-height:12px;font-weight:normal;color:#111;letter-spacing:0.27px;font-family:'Liberation Sans', sans-serif;">Arquivos</div>
<div class="t" style="left:607.8px;top:559.64px;font-size:12px;line-height:12px;font-weight:bold;color:#111;letter-spacing:0.8px;font-family:'Liberation Sans', sans-serif;">Intercâmbio Bancário</div>
<div class="t" style="left:6.3px;top:586.10px;font-size:13px;line-height:13px;font-weight:bold;color:#111;letter-spacing:0px;font-family:'Liberation Sans', sans-serif;">Registro 1 de 25</div>
<div class="t" style="left:129.8px;top:586.64px;font-size:12px;line-height:12px;font-weight:normal;color:#111;letter-spacing:0.25px;font-family:'Liberation Sans', sans-serif;"><u>A</u>rquivo</div>
<div style="position:absolute;left:177px;top:581px;width:551px;height:23px;background:#ffffff;border:1px solid #7d8799;box-sizing:border-box"></div>
<div class="t" style="left:178.6px;top:584.74px;font-size:12px;line-height:12px;font-weight:normal;color:#111;letter-spacing:0.1px;font-family:'Liberation Sans', sans-serif;">C:\IWS\BOLETO</div>
<div style="position:absolute;left:271px;top:584px;width:1px;height:15px;background:#000"></div>
<div style="position:absolute;left:706px;top:581px;width:22px;height:23px;background:#efefef;border-top:1px solid #a0a6b0;border-left:2px solid #ffffff;border-right:2px solid #6a6f78;border-bottom:2px solid #6a6f78;box-sizing:border-box"></div>
<svg style="left:704px;top:580px" width="26" height="26">
<path d="M6 11H10L10.6 12.4H15.2V14H19.2L16.6 19.2H6Z" fill="#000"/>
<path d="M7 12.1H9.4L10 13.5H14.1V14.9H8.4L7 17.6Z" fill="#f2ee48"/>
<path d="M8.7 15.5H17.6L15.8 18.1H7.3Z" fill="#e6e15a"/>
<path d="M9 16.3h8M8.5 17.3h7.5" stroke="#9a9630" stroke-width="0.5" stroke-dasharray="1 1"/>
<path d="M11 9.2Q14 6.2 17 9.6" stroke="#000" stroke-width="1.3" fill="none"/>
<path d="M15.2 10L18.6 11.3L18 7.8Z" fill="#000"/>
</svg>
<div style="position:absolute;left:741px;top:581px;width:88px;height:23px;background:linear-gradient(#ffffff,#f3f6fd 45%,#d3ddf4);border:1px solid #5c6372;border-radius:2px;box-sizing:border-box"></div>
<svg style="left:744px;top:582px" width="22" height="22"><path d="M8 3.3H16.5L12.2 8L14.6 8.5L11 13H13.2L8.5 18.5L9.6 13.6H7.4L9 10.6L5.6 10.2Z" fill="#f4ec3a" stroke="#8e8a2e" stroke-width="0.9" stroke-linejoin="round"/></svg>
<div class="t" style="left:780.3px;top:586.54px;font-size:12px;line-height:12px;font-weight:normal;color:#1b2a4d;letter-spacing:0px;font-family:'Liberation Sans', sans-serif;"><u>G</u>erar</div>
<div style="position:absolute;left:839px;top:581px;width:133px;height:23px;background:linear-gradient(#ffffff,#f3f6fd 45%,#d3ddf4);border:1px solid #5c6372;border-radius:2px;box-sizing:border-box"></div>
<svg style="left:842px;top:582px" width="22" height="22">
<defs><linearGradient id="sg" x1="0" y1="0" x2="1" y2="1"><stop offset="0" stop-color="#f4b0b8"/><stop offset="1" stop-color="#dc4a5c"/></linearGradient>
<linearGradient id="hg" x1="0" y1="1" x2="1" y2="0"><stop offset="0" stop-color="#e0a020"/><stop offset="1" stop-color="#fff080"/></linearGradient></defs>
<path d="M11.5 7.5L15.5 3.2Q17.8 2.8 18 5L14.8 9.5Z" fill="url(#hg)"/>
<path d="M3.8 8.4L8 4.2L17.4 12.6L12.4 17.4Z" fill="url(#sg)" stroke="#4a1222" stroke-width="1.1" stroke-linejoin="round"/>
<path d="M9.2 5.8L15.8 12" stroke="#ffe4e8" stroke-width="1"/>
<circle cx="6" cy="11.2" r="0.7" fill="#fff"/><circle cx="8.2" cy="13.4" r="0.7" fill="#fff"/><circle cx="10.2" cy="15.2" r="0.7" fill="#fff"/>
</svg>
<div class="t" style="left:870.5px;top:586.54px;font-size:12px;line-height:12px;font-weight:normal;color:#1b2a4d;letter-spacing:0.08px;font-family:'Liberation Sans', sans-serif;">Importar Retorno</div>
<div style="position:absolute;left:0px;top:631px;width:1364px;height:1px;background:#000"></div>
<div style="position:absolute;left:86px;top:630px;width:1278px;height:1px;background:#ffffff"></div>
<div style="position:absolute;left:0px;top:611px;width:1363px;height:1px;background:#ffffff"></div>
<svg width="1364" height="632" style="left:0;top:0">
<path d="M0 630.6H84L100.6 613.5H1364" fill="none" stroke="#000" stroke-width="1.1"/>
<path d="M0 631H84" stroke="#000" stroke-width="2"/>
</svg>
<div class="t" style="left:10.8px;top:615.64px;font-size:12px;line-height:12px;font-weight:normal;color:#111;letter-spacing:0px;font-family:'Liberation Sans', sans-serif;">EDI Bancos</div>
</body></html>
